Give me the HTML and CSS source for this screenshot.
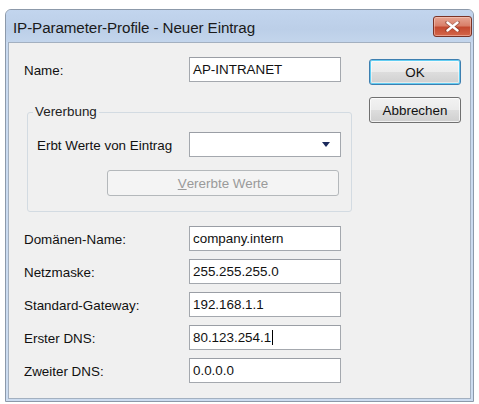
FILE: index.html
```html
<!DOCTYPE html>
<html lang="de">
<head>
<meta charset="utf-8">
<title>IP-Parameter-Profile - Neuer Eintrag</title>
<link rel="stylesheet" href="styles.css">
</head>
<body>
<div class="window">
  <div class="titlebar">
    <span class="title">IP-Parameter-Profile - Neuer Eintrag</span>
    <div class="close">
      <svg width="15" height="11" viewBox="0 0 15 11"><path d="M2 1.5 L13 9.5 M13 1.5 L2 9.5" stroke="#5a2218" stroke-width="3.6" stroke-linecap="round" opacity="0.45"/><path d="M2.5 1.5 L12.5 9.5 M12.5 1.5 L2.5 9.5" stroke="#ffffff" stroke-width="2.4" stroke-linecap="round"/></svg>
    </div>
  </div>
  <div class="client">
    <div class="form">
      <div class="row">
        <label class="lbl">Name:</label>
        <div class="input">AP-INTRANET</div>
      </div>
      <fieldset class="group">
        <legend>Vererbung</legend>
        <div class="row">
          <label class="lbl lbl-inner">Erbt Werte von Eintrag</label>
          <div class="input combo">
            <svg class="arrow" width="8" height="5" viewBox="0 0 8 5"><path d="M0 0 H8 L4 5 Z" fill="#1b2a5c"/></svg>
          </div>
        </div>
        <div class="btn disabled inherit-btn"><span class="u">V</span>ererbte Werte</div>
      </fieldset>
      <div class="fields">
        <div class="row"><label class="lbl">Domänen-Name:</label><div class="input">company.intern</div></div>
        <div class="row"><label class="lbl">Netzmaske:</label><div class="input">255.255.255.0</div></div>
        <div class="row"><label class="lbl">Standard-Gateway:</label><div class="input">192.168.1.1</div></div>
        <div class="row"><label class="lbl">Erster DNS:</label><div class="input">80.123.254.1<span class="caret"></span></div></div>
        <div class="row"><label class="lbl">Zweiter DNS:</label><div class="input">0.0.0.0</div></div>
      </div>
    </div>
    <div class="buttons">
      <div class="btn default">OK</div>
      <div class="btn">Abbrechen</div>
    </div>
  </div>
</div>
</body>
</html>
```
FILE: styles.css
```css
html, body {
  margin: 0;
  padding: 0;
  background: #ffffff;
}

body {
  font-family: "Liberation Sans", Arial, sans-serif;
  font-size: 13.4px;
  color: #111111;
}

.window {
  box-sizing: border-box;
  width: 469px;
  height: 393px;
  margin: 9px 0 0 5px;
  border: 1px solid #8c99aa;
  border-radius: 6px 6px 0 0;
  background: linear-gradient(#c4d6ee, #c9daf0 40px, #ccdcf0);
  display: flex;
  flex-direction: column;
}

.titlebar {
  height: 32px;
  display: flex;
  align-items: flex-start;
  justify-content: space-between;
  padding: 0 1px 0 7px;
  background: linear-gradient(#c2d5ee, #bccfe8 60%, #c3d5ec);
  border-radius: 5px 5px 0 0;
}

.title {
  font-size: 15.2px;
  line-height: 18px;
  margin-top: 9px;
  color: #1a1a1a;
  letter-spacing: -0.1px;
}

.close {
  box-sizing: border-box;
  width: 39px;
  height: 21px;
  margin-top: 6px;
  border: 1px solid #7a3326;
  border-radius: 3px;
  background: linear-gradient(#e6a593, #d9806a 45%, #c44a30 55%, #d4664a);
  display: flex;
  align-items: center;
  justify-content: center;
  box-shadow: inset 0 0 0 1px rgba(255, 220, 210, 0.45);
}

.client {
  flex: 1;
  margin: 0 2px 2px 2px;
  border: 1px solid #a3b0c0;
  background: #f0f0f0;
  display: flex;
  padding: 14px 0 0 15px;
}

.form {
  width: 328px;
  display: flex;
  flex-direction: column;
}

.row {
  display: flex;
  align-items: center;
  height: 25px;
}

.lbl {
  width: 165px;
  flex: none;
  padding-top: 2px;
}

.lbl-inner {
  width: 152px;
}

.input {
  box-sizing: border-box;
  width: 152px;
  height: 25px;
  border: 1px solid #a4a8ae;
  border-top-color: #9a9ea5;
  background: #ffffff;
  padding: 0 0 0 3px;
  display: flex;
  align-items: center;
  white-space: nowrap;
  color: #111111;
}

.combo {
  justify-content: flex-end;
  padding-right: 10px;
}

.arrow {
  display: block;
}

.caret {
  display: inline-block;
  width: 1px;
  height: 15px;
  background: #000000;
  margin-left: 1px;
}

.group {
  box-sizing: border-box;
  width: 325px;
  margin: 22px 0 0 3px;
  padding: 12px 10px 15px 9px;
  border: 1px solid #d3dbe2;
  border-radius: 3px;
  min-width: 0;
}

.group legend {
  padding: 0 2px;
  margin-left: -4px;
  line-height: 16px;
  color: #222222;
}

.btn {
  box-sizing: border-box;
  height: 26px;
  border: 1px solid #707070;
  border-radius: 3px;
  background: linear-gradient(#f2f2f2, #ebebeb 49%, #dddddd 51%, #cfcfcf);
  box-shadow: inset 0 0 0 1px rgba(255, 255, 255, 0.7);
  display: flex;
  align-items: center;
  justify-content: center;
  color: #111111;
}

.inherit-btn {
  width: 232px;
  margin: 13px 0 0 70px;
}

.btn.disabled {
  border-color: #b4b8bb;
  background: #f4f4f4;
  box-shadow: none;
  color: #9a9a9a;
}

.u {
  text-decoration: underline;
}

.fields {
  display: flex;
  flex-direction: column;
  gap: 8px;
  margin-top: 14px;
}

.buttons {
  margin-left: 17px;
  padding-top: 2px;
  display: flex;
  flex-direction: column;
  gap: 12px;
}

.buttons .btn {
  width: 92px;
}

.btn.default {
  border-color: #3d7fb0;
  box-shadow: inset 0 0 0 1px #62cdf2, inset 0 0 0 2px rgba(255, 255, 255, 0.5);
}
```
